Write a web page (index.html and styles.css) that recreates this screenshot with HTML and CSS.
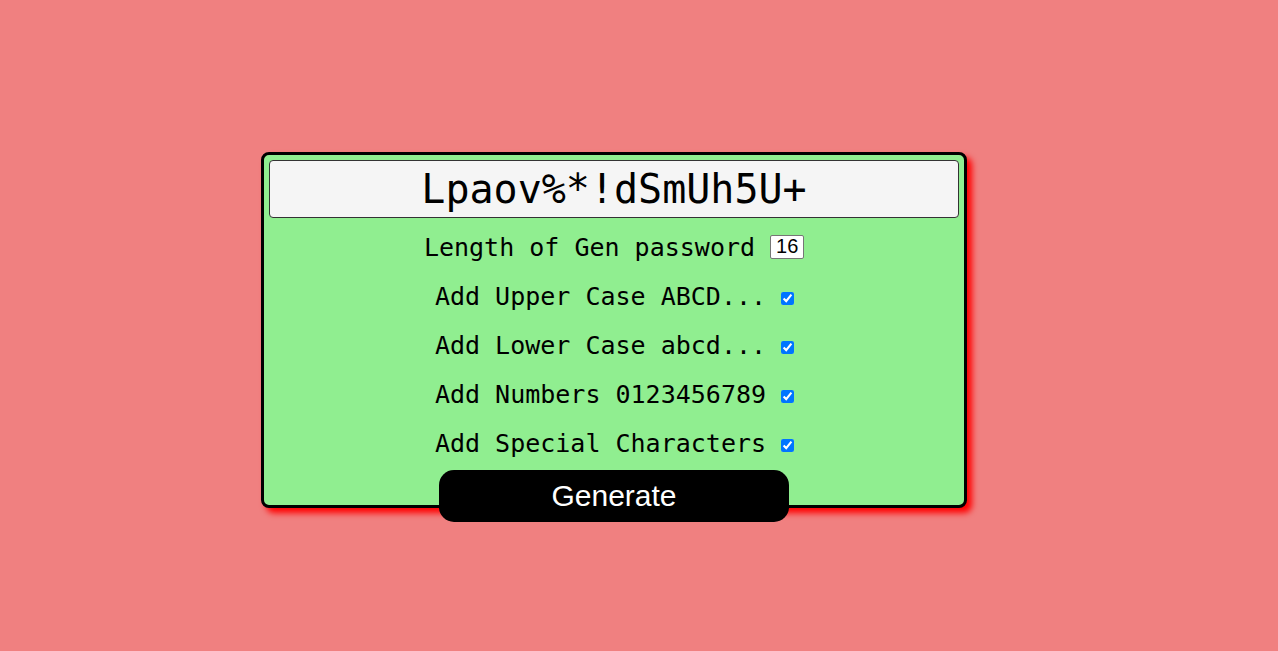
FILE: index.html
```html
<!DOCTYPE html>
<html>
<head>
<meta charset="utf-8">
<link rel="stylesheet" href="styles.css">
</head>
<body>
<div class="card">
  <input class="pass" type="text" value="Lpaov%*!dSmUh5U+" readonly>
  <div class="row first">Length of Gen password <input class="num" type="number" value="16"></div>
  <div class="row">Add Upper Case ABCD... <input class="chk" type="checkbox" checked></div>
  <div class="row">Add Lower Case abcd... <input class="chk" type="checkbox" checked></div>
  <div class="row">Add Numbers 0123456789 <input class="chk" type="checkbox" checked></div>
  <div class="row">Add Special Characters <input class="chk" type="checkbox" checked></div>
  <div class="btnwrap"><button class="gen">Generate</button></div>
</div>
</body>
</html>
```
FILE: styles.css
```css
html, body {
  margin: 0;
  padding: 0;
}
body {
  background: #f08080;
  width: 1278px;
  height: 651px;
  overflow: hidden;
}
.card {
  box-sizing: border-box;
  width: 706px;
  height: 356px;
  margin: 152px 0 0 261px;
  border: 3px solid #000;
  border-radius: 8px;
  background: #90ee90;
  box-shadow: 5px 5px 6px #ff0000;
  padding: 5px 5px 0 5px;
  font-family: "DejaVu Sans Mono", monospace;
  font-size: 25px;
  color: #000;
}
.pass {
  box-sizing: border-box;
  display: block;
  width: 100%;
  height: 58px;
  margin: 0;
  border: 1px solid #333;
  border-radius: 4px;
  background: #f5f5f5;
  font-family: "DejaVu Sans Mono", monospace;
  font-size: 40px;
  text-align: center;
  color: #000;
  padding: 0;
  outline: none;
}
.row {
  height: 49px;
  line-height: 49px;
  text-align: center;
  white-space: pre;
}
.row.first {
  margin-top: 5px;
}
.num {
  box-sizing: border-box;
  width: 34px;
  height: 24px;
  font-family: "Liberation Sans", Arial, sans-serif;
  font-size: 20px;
  line-height: 22px;
  padding: 0 0 0 5px;
  border: 1px solid #767676;
  border-radius: 2px;
  vertical-align: 3px;
  -moz-appearance: textfield;
}
.num::-webkit-inner-spin-button,
.num::-webkit-outer-spin-button {
  -webkit-appearance: none;
  margin: 0;
}
.chk {
  width: 13px;
  height: 13px;
  margin: 0 -1px 0 0;
  vertical-align: 0;
}
.btnwrap {
  display: flex;
  justify-content: center;
  margin-top: 2px;
}
.gen {
  width: 350px;
  height: 52px;
  border: none;
  border-radius: 15px;
  background: #000;
  color: #fff;
  font-family: "Liberation Sans", Arial, sans-serif;
  font-size: 30px;
  padding: 0;
}
```
